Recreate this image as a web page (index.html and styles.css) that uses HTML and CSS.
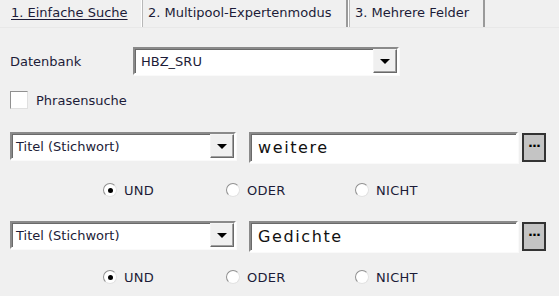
FILE: index.html
```html
<!DOCTYPE html>
<html lang="de">
<head>
  <meta charset="UTF-8">
  <title>Suche</title>
  <link rel="stylesheet" href="styles.css">
</head>
<body>
  <div class="tabs">
    <div class="tab active"><span>1. Einfache Suche</span></div>
    <div class="tab expert">2. Multipool-Expertenmodus</div>
    <div class="tab fields">3. Mehrere Felder</div>
  </div>

  <section class="panel">
    <div class="db-row">
      <label class="db-label">Datenbank</label>
      <div class="combo db-combo">
        <span class="combo-text">HBZ_SRU</span>
        <span class="combo-btn"><span class="arrow"></span></span>
      </div>
    </div>

    <div class="check-row">
      <span class="checkbox"></span>
      <span>Phrasensuche</span>
    </div>

    <div class="field-row">
      <div class="combo field-combo">
        <span class="combo-text">Titel (Stichwort)</span>
        <span class="combo-btn"><span class="arrow"></span></span>
      </div>
      <div class="term">weitere</div>
      <div class="dots-btn">&middot;&middot;&middot;</div>
    </div>
    <div class="radio-row">
      <div class="radio-item"><span class="radio checked"></span>UND</div>
      <div class="radio-item"><span class="radio"></span>ODER</div>
      <div class="radio-item"><span class="radio"></span>NICHT</div>
    </div>

    <div class="field-row">
      <div class="combo field-combo">
        <span class="combo-text">Titel (Stichwort)</span>
        <span class="combo-btn"><span class="arrow"></span></span>
      </div>
      <div class="term">Gedichte</div>
      <div class="dots-btn">&middot;&middot;&middot;</div>
    </div>
    <div class="radio-row last">
      <div class="radio-item"><span class="radio checked"></span>UND</div>
      <div class="radio-item"><span class="radio"></span>ODER</div>
      <div class="radio-item"><span class="radio"></span>NICHT</div>
    </div>
  </section>
</body>
</html>
```

FILE: styles.css
```css
body {
  margin: 0;
  background-color: #f0f0f0;
  font-family: "DejaVu Sans", sans-serif;
  font-size: 13px;
  color: #1c1c38;
}

.tabs {
  display: flex;
  height: 27px;
  padding-left: 5px;
  border-bottom: 1px solid #e8e8e8;
}

.tab {
  box-sizing: border-box;
  display: flex;
  align-items: center;
  padding: 0 0 2px 6px;
  border-left: 1px solid #ffffff;
  border-right: 2px solid #9a9a9a;
  box-shadow: inset 1px 0 0 #b8b8b8;
}

.tab.active {
  width: 136px;
  border: none;
  box-shadow: none;
}

.tab.expert {
  width: 207px;
}

.tab.fields {
  width: 137px;
}

.tab.active span {
  text-decoration: underline;
  text-underline-offset: 2px;
}

.panel {
  padding: 19px 9px 0 10px;
}

/* sunken 3d frame */
.combo,
.term {
  box-sizing: border-box;
  background-color: #fff;
  border-style: solid;
  border-width: 2px;
  border-color: #8a8a8a #ffffff #ffffff #8a8a8a;
  box-shadow: inset 1px 1px 0 #6a6a6a, 1px 1px 0 #fafafa;
}

.combo {
  display: flex;
  align-items: center;
  justify-content: space-between;
  padding-left: 4px;
}

.combo-btn {
  box-sizing: border-box;
  width: 24px;
  height: 100%;
  display: flex;
  align-items: center;
  justify-content: center;
  background-color: #f0f0f0;
  border-style: solid;
  border-width: 1px;
  border-color: #f4f4f4 #696969 #696969 #f4f4f4;
  box-shadow: inset -1px -1px 0 #a0a0a0;
}

.arrow {
  width: 0;
  height: 0;
  border-left: 5px solid transparent;
  border-right: 5px solid transparent;
  border-top: 5px solid #000;
}

.db-row {
  display: flex;
  align-items: center;
}

.db-label {
  width: 123px;
}

.db-combo {
  width: 266px;
  height: 28px;
  padding-left: 6px;
}

.check-row {
  display: flex;
  align-items: center;
  gap: 8px;
  margin-top: 16px;
}

.checkbox {
  box-sizing: border-box;
  width: 18px;
  height: 18px;
  background-color: #fff;
  border: 1px solid #909090;
  border-right-color: #e0e0e0;
  border-bottom-color: #e0e0e0;
}

.field-row {
  display: flex;
  align-items: flex-start;
  margin-top: 23px;
}

.field-row + .radio-row + .field-row {
  margin-top: 0;
}

.field-combo {
  width: 226px;
  height: 28px;
}

.term {
  width: 269px;
  height: 31px;
  margin-left: 13px;
  padding: 4px 0 0 7px;
  font-size: 16px;
  letter-spacing: 1.6px;
  color: #111;
}

.dots-btn {
  box-sizing: border-box;
  width: 24px;
  height: 29px;
  margin-left: 4px;
  margin-top: 1px;
  border: 2px solid #333;
  background-color: #c4c4c4;
  font-weight: bold;
  font-size: 13px;
  line-height: 22px;
  text-align: center;
  letter-spacing: -1px;
  color: #000;
}

.radio-row {
  display: flex;
  height: 14px;
  align-items: center;
  padding: 20px 0 24px 93px;
  font-size: 13px;
  letter-spacing: 0.3px;
}

.radio-row.last {
  padding-top: 18px;
}

.radio-item {
  display: flex;
  align-items: center;
  gap: 7px;
  width: 123px;
}

.radio-item:nth-child(2) {
  width: 129px;
}

.radio {
  box-sizing: border-box;
  width: 14px;
  height: 14px;
  border-radius: 50%;
  background-color: #fff;
  border: 1px solid #909090;
  border-right-color: #e2e2e2;
  border-bottom-color: #e2e2e2;
  display: flex;
  align-items: center;
  justify-content: center;
}

.radio.checked::after {
  content: "";
  width: 5px;
  height: 5px;
  border-radius: 50%;
  background-color: #000;
}
```
